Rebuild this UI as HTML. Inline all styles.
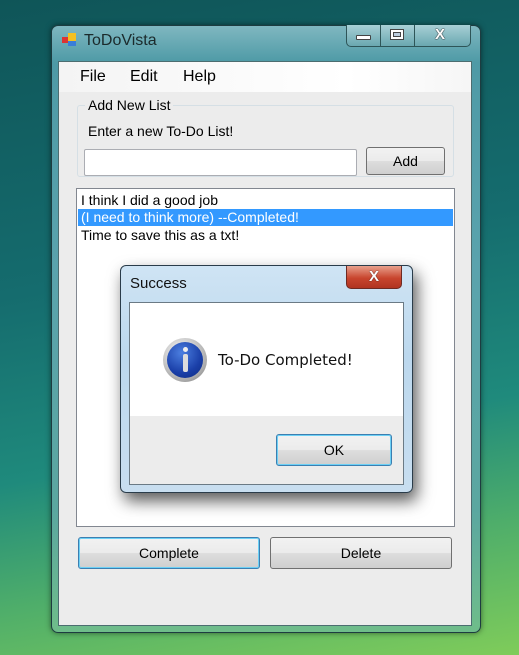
<!DOCTYPE html>
<html><head><style>
*{box-sizing:border-box;margin:0;padding:0}
body{width:519px;height:655px;overflow:hidden;position:relative;font-family:"Liberation Sans",sans-serif;font-size:14px;color:#000;
background:linear-gradient(170deg,#0f5558 0%,#156c6e 40%,#1f8a7c 65%,#4fae6a 82%,#7fcc5a 100%);}
.abs{position:absolute}
.win{left:51px;top:25px;width:430px;height:608px;border:1px solid #1d3c40;border-radius:7px;
background:linear-gradient(180deg,#7fb7c0 0%,#4e9aa6 6%,#5aa3ad 40%,#5ba7a0 80%,#6fbd8a 100%);box-shadow:0 0 6px rgba(0,0,0,.5)}
.client{left:58px;top:61px;width:414px;height:565px;background:#ececec;border:1px solid #4c6d70}
.btn{background:linear-gradient(#f2f2f2 0%,#ebebeb 50%,#dddddd 51%,#cfcfcf 100%);border:1px solid #707070;border-radius:3px;text-align:center;font-size:14px}
</style></head><body>
<div class="abs win"></div>
<div class="abs" style="left:346px;top:25px;width:125px;height:22px;border:1px solid #2e5558;border-top:none;border-radius:0 0 5px 5px;background:linear-gradient(#a8d0d6,#6aa7b0);"></div>
<div class="abs" style="left:380px;top:25px;width:1px;height:21px;background:#2e5558"></div>
<div class="abs" style="left:414px;top:25px;width:1px;height:21px;background:#2e5558"></div>
<div class="abs" style="left:356px;top:35px;width:15px;height:5px;background:#fff;border:1px solid #444;border-radius:1px"></div>
<div class="abs" style="left:390px;top:29px;width:14px;height:11px;border:1px solid #444;background:#fff"><div style="margin:2px;height:5px;border:1px solid #444;background:#bcd"></div></div>
<div class="abs" style="left:435px;top:26px;font-size:15px;font-weight:bold;color:#fff;text-shadow:0 0 1px #000,0 0 1px #000">X</div>
<div class="abs" style="left:62px;top:37px;width:6px;height:6px;background:#d33"></div>
<div class="abs" style="left:68px;top:33px;width:8px;height:8px;background:#f4c020"></div>
<div class="abs" style="left:68px;top:41px;width:8px;height:5px;background:#3a7ed8"></div>
<div class="abs" style="left:84px;top:32px;font-size:16px;color:#1b2a2b">ToDoVista</div>
<div class="abs client"></div>
<div class="abs" style="left:59px;top:62px;width:412px;height:30px;background:linear-gradient(90deg,#f4f4f4,#ffffff 70%,#f6f6f6)"></div>
<div class="abs" style="left:80px;top:68px;font-size:16px">File</div>
<div class="abs" style="left:130px;top:68px;font-size:16px">Edit</div>
<div class="abs" style="left:183px;top:68px;font-size:16px">Help</div>
<div class="abs" style="left:77px;top:105px;width:377px;height:72px;border:1px solid #d5dfe5;border-radius:3px"></div>
<div class="abs" style="left:85px;top:97px;background:#ececec;padding:0 3px">Add New List</div>
<div class="abs" style="left:88px;top:123px">Enter a new To-Do List!</div>
<div class="abs" style="left:84px;top:149px;width:273px;height:27px;background:#fff;border:1px solid #abadb3;border-radius:2px"></div>
<div class="abs btn" style="left:366px;top:147px;width:79px;height:28px;line-height:26px">Add</div>
<div class="abs" style="left:76px;top:188px;width:379px;height:339px;background:#fff;border:1px solid #828790"></div>
<div class="abs" style="left:81px;top:192px">I think I did a good job</div>
<div class="abs" style="left:78px;top:209px;width:375px;height:17px;background:#3399ff"></div>
<div class="abs" style="left:81px;top:209px;color:#fff">(I need to think more) --Completed!</div>
<div class="abs" style="left:81px;top:227px">Time to save this as a txt!</div>
<div class="abs btn" style="left:78px;top:537px;width:182px;height:32px;line-height:30px;border:1px solid #3c7fb1;box-shadow:inset 0 0 0 1px #6cd0f5">Complete</div>
<div class="abs btn" style="left:270px;top:537px;width:182px;height:32px;line-height:30px">Delete</div>
<div class="abs" style="left:120px;top:265px;width:293px;height:228px;border:1px solid #2a3c4a;border-radius:6px;background:linear-gradient(180deg,#cfe4f4,#bcd8ee 40%,#c8def0);box-shadow:4px 8px 16px rgba(0,0,0,.65)"></div>
<div class="abs" style="left:346px;top:266px;width:56px;height:23px;border:1px solid #6e2a22;border-top:none;border-radius:0 0 5px 5px;background:linear-gradient(#e8a08c,#c8452e 55%,#b03420)"></div>
<div class="abs" style="left:369px;top:268px;font-size:15px;font-weight:bold;color:#fff;text-shadow:0 0 1px #000">X</div>
<div class="abs" style="left:130px;top:275px;font-size:15px;color:#111">Success</div>
<div class="abs" style="left:129px;top:302px;width:275px;height:183px;background:#ececec;border:1px solid #6b7a85"></div>
<div class="abs" style="left:130px;top:303px;width:273px;height:113px;background:#fff"></div>
<div class="abs" style="left:163px;top:338px;width:44px;height:44px;border-radius:50%;background:radial-gradient(circle at 40% 35%,#fff,#aaa 70%,#666);"></div>
<div class="abs" style="left:167px;top:342px;width:36px;height:36px;border-radius:50%;background:radial-gradient(circle at 40% 30%,#4c7fe0,#1a3fa8 60%,#0d2a80)"></div>
<div class="abs" style="left:183px;top:347px;width:5px;height:5px;border-radius:50%;background:#eee"></div>
<div class="abs" style="left:183px;top:354px;width:5px;height:18px;border-radius:2px;background:#ddd"></div>
<div class="abs" style="left:218px;top:351px;font-size:15px;font-family:'DejaVu Sans',sans-serif;color:#111">To-Do Completed!</div>
<div class="abs btn" style="left:276px;top:434px;width:116px;height:32px;line-height:30px;border:1px solid #3c7fb1;box-shadow:inset 0 0 0 1px #6cd0f5">OK</div>
</body></html>
